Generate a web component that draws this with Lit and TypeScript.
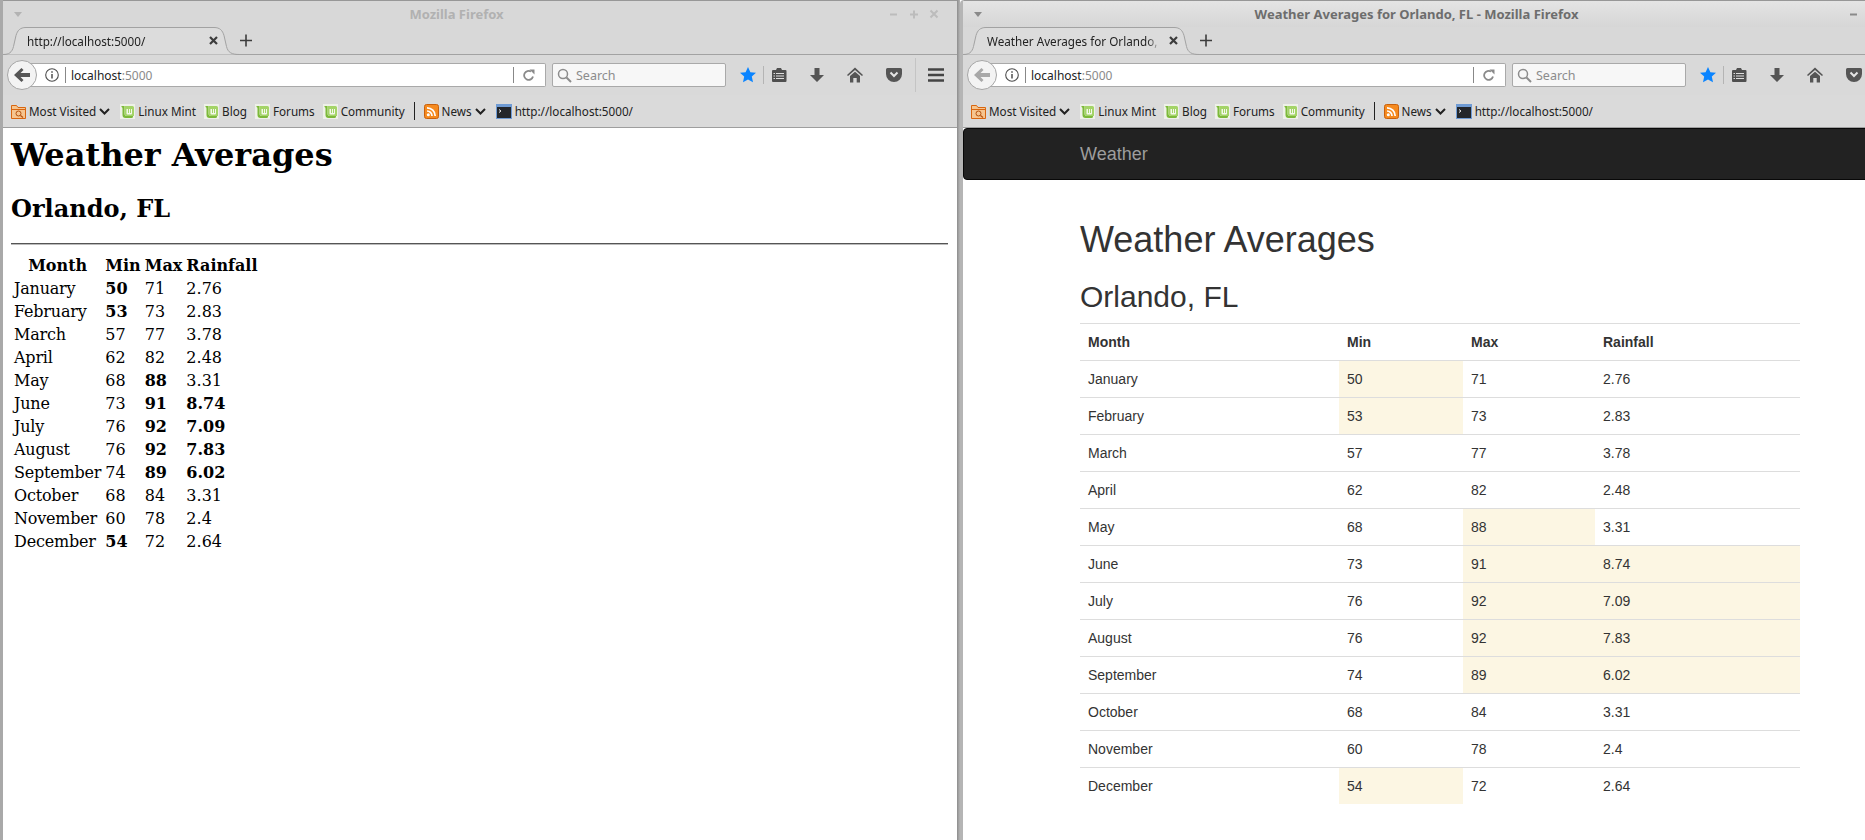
import { LitElement, html, css, svg } from 'lit';
import { customElement, property } from 'lit/decorators.js';

const MONTHS: [string, number, number, string][] = [
  ['January', 50, 71, '2.76'],
  ['February', 53, 73, '2.83'],
  ['March', 57, 77, '3.78'],
  ['April', 62, 82, '2.48'],
  ['May', 68, 88, '3.31'],
  ['June', 73, 91, '8.74'],
  ['July', 76, 92, '7.09'],
  ['August', 76, 92, '7.83'],
  ['September', 74, 89, '6.02'],
  ['October', 68, 84, '3.31'],
  ['November', 60, 78, '2.4'],
  ['December', 54, 72, '2.64'],
];

const coldMin = (v: number) => v < 55;
const hotMax = (v: number) => v > 85;
const wetMonth = (v: string) => parseFloat(v) > 5;

const mintIcon = html`<svg class="ico" width="15" height="15" viewBox="0 0 15 15">
  <rect width="15" height="15" fill="#eef1e8" />
  <path d="M1.500 2h3v7.500a2.500 2.500 0 0 0 2.500 2.500h6v.5a1.500 1.500 0 0 1-1.500 1.500H5.500a3 3 0 0 1-3-3V4.500a1.500 1.500 0 0 0-1-1.500z" fill="#7cb93a" />
  <path d="M4.500 2h8a1.500 1.500 0 0 1 1.500 1.500V12H7a2.500 2.500 0 0 1-2.500-2.500z" fill="#a4d468" />
  <path d="M6.500 9V5h1.500v4h1V5h1v4h1V5h1v4.500a1 1 0 0 1-1 1H7.500a1 1 0 0 1-1-1z" fill="#f3f8ea" />
</svg>`;

const folderIcon = html`<svg class="ico" width="15" height="15" viewBox="0 0 15 15">
  <path d="M.5 1.500h5l1.500 2h7.500v11H.5z" fill="#f6c58f" stroke="#d9660f" />
  <path d="M.5 5.500h14" stroke="#d9660f" />
  <circle cx="7.500" cy="9.500" r="2.500" fill="none" stroke="#b5500c" />
  <path d="M9.500 11.500l2.500 2" stroke="#b5500c" stroke-width="1.300" />
</svg>`;

const rssIcon = html`<svg class="ico" width="15" height="15" viewBox="0 0 15 15">
  <rect x=".5" y=".5" width="14" height="14" rx="2" fill="#f58a1f" stroke="#c9610c" />
  <circle cx="4.300" cy="10.700" r="1.500" fill="#fff" />
  <path d="M3 7a5 5 0 0 1 5 5M3 3.800A8.200 8.200 0 0 1 11.200 12" fill="none" stroke="#fff" stroke-width="1.700" />
</svg>`;

const termIcon = html`<svg class="ico" width="16" height="15" viewBox="0 0 16 15">
  <rect width="16" height="15" fill="#6f9bd4" />
  <rect x="1" y="3" width="14" height="11" fill="#23262b" />
  <path d="M3 5.500l2 1.500-2 1.500" fill="none" stroke="#e8e8e8" />
</svg>`;

const chevron = html`<svg class="chev" width="11" height="7" viewBox="0 0 11 7">
  <path d="M1 1l4.500 4.500L10 1" fill="none" stroke="#222" stroke-width="2" />
</svg>`;

const toolIcon = (body: unknown, w = 16) =>
  html`<svg class="tool" width=${w} height="16" viewBox="0 0 16 16">${body}</svg>`;

const starIcon = toolIcon(svg`<path d="M8 0l2.400 5.200 5.600.6-4.200 3.800 1.200 5.700L8 12.400l-5 2.900 1.200-5.700L0 5.800l5.600-.6z" fill="#0a84ff" />`);
const clipIcon = toolIcon(svg`<path d="M1.500 3h3.500l1-2h4l1 2h3.500a1 1 0 0 1 1 1v10a1 1 0 0 1-1 1h-12.500a1 1 0 0 1-1-1V4a1 1 0 0 1 1-1z" fill="#4f4f4f" /><path d="M5 6.500h8M5 9h8M5 11.500h8M2.500 6.500h1.500M2.500 9h1.500M2.500 11.500h1.500" stroke="#ddd" stroke-width="1.200" />`);
const downIcon = toolIcon(svg`<path d="M5.500 1h5v7H15l-7 7-7-7h4.500z" fill="#555" />`);
const homeIcon = toolIcon(svg`<path d="M8 .500L16 8l-1 1-7-6-7 6-1-1z" fill="#555" /><path d="M3 9l5-4.200L13 9v6.500h-3.300V11H6.300v4.500H3z" fill="#555" />`);
const pocketIcon = toolIcon(svg`<path d="M1.500 1h13A1.500 1.500 0 0 1 16 2.500V7a8 8 0 0 1-16 0V2.500A1.500 1.500 0 0 1 1.500 1z" fill="#555" /><path d="M4.500 5.500L8 9l3.500-3.500" fill="none" stroke="#e4e4e4" stroke-width="2" />`);
const menuIcon = toolIcon(svg`<path d="M0 2.500h16M0 8h16M0 13.500h16" stroke="#444" stroke-width="2.400" />`);

@customElement('browser-window')
export class BrowserWindow extends LitElement {
  @property({ type: Boolean, reflect: true }) active = false;
  @property() winTitle = '';
  @property() tabTitle = '';

  static styles = css`
    :host {
      display: flex;
      flex-direction: column;
      flex: none;
      width: 960px;
      height: 840px;
      box-sizing: border-box;
      border-left: 3px solid #a9a9a9;
      background: #d8d8d8;
      font-family: 'Noto Sans', sans-serif;
      font-size: 11.700px;
      color: #222;
      position: relative;
      overflow: hidden;
    }
    :host([active]) {
      border-top-left-radius: 4px;
      border-left-color: #b5b5b5;
    }
    .edge {
      position: absolute;
      top: 0;
      right: 0;
      bottom: 0;
      width: 3px;
      background: linear-gradient(to right, #8c8c8c, #b5b5b5);
    }
    .titlebar {
      display: flex;
      align-items: center;
      height: 27px;
      border-top: 1px solid #979797;
      box-sizing: border-box;
      padding-left: 11px;
    }
    :host([active]) .titlebar {
      background: linear-gradient(#e4e4e4, #d6d6d6);
    }
    .menu-arrow {
      width: 0;
      height: 0;
      border-left: 4px solid transparent;
      border-right: 4px solid transparent;
      border-top: 5px solid #b3b3b3;
      margin-right: 8px;
    }
    :host([active]) .menu-arrow {
      border-top-color: #8a8a8a;
    }
    .title {
      flex: 1;
      text-align: center;
      font-weight: 700;
      font-size: 13px;
      color: #b1b1b1;
    }
    :host([active]) .title {
      color: #6d6d6d;
    }
    .controls {
      display: flex;
      gap: 10px;
      width: 77px;
      box-sizing: border-box;
      padding-left: 6px;
    }
    .controls svg {
      display: block;
    }
    .tabs {
      position: relative;
      display: flex;
      align-items: center;
      height: 28px;
      flex: none;
      border-bottom: 1px solid #a2a2a2;
      box-sizing: border-box;
    }
    .tab {
      position: relative;
      display: flex;
      align-items: center;
      width: 237px;
      height: 28px;
      box-sizing: border-box;
      padding: 0 22px 0 24px;
    }
    .tab-shape {
      position: absolute;
      left: 0;
      top: 0;
    }
    .tab-text {
      position: relative;
      flex: 1;
      overflow: hidden;
      white-space: nowrap;
      -webkit-mask-image: linear-gradient(to right, #000 92%, transparent);
    }
    .tab-close {
      position: relative;
      margin-left: 8px;
    }
    .new-tab {
      display: block;
    }
    .toolbar {
      display: flex;
      align-items: center;
      height: 40px;
      flex: none;
      padding-left: 4px;
      background: #d9d9d9;
    }
    .back {
      position: relative;
      display: flex;
      align-items: center;
      justify-content: center;
      width: 30px;
      height: 30px;
      box-sizing: border-box;
      border-radius: 50%;
      border: 1px solid #a6a6a6;
      background: #f3f3f3;
      margin-right: -7px;
      flex: none;
    }
    .urlbar {
      display: flex;
      align-items: center;
      width: 516px;
      height: 24px;
      box-sizing: border-box;
      border: 1px solid #a9a9a9;
      border-left: none;
      border-radius: 0 2px 2px 0;
      background: #fff;
      font-size: 12px;
      flex: none;
    }
    .info {
      margin-left: 15px;
      flex: none;
    }
    .bar-sep {
      width: 1px;
      height: 16px;
      background: #888;
      flex: none;
    }
    .info-sep {
      margin-left: 6px;
    }
    .host {
      flex: 1;
      margin-left: 5px;
    }
    .host span {
      color: #8a8a8a;
    }
    .reload {
      width: 31px;
      padding-right: 1px;
      box-sizing: border-box;
      display: flex;
      justify-content: center;
    }
    .search {
      display: flex;
      align-items: center;
      gap: 4px;
      width: 174px;
      height: 24px;
      box-sizing: border-box;
      margin-left: 6px;
      padding-left: 4px;
      border: 1px solid #a9a9a9;
      border-radius: 2px;
      background: #f7f7f7;
      color: #8c8c8c;
      font-size: 12.500px;
      flex: none;
    }
    .tools {
      display: flex;
      align-items: center;
      height: 40px;
    }
    .tool {
      display: block;
      flex: none;
    }
    .t-star { margin-left: 14px; }
    .t-sep1 { width: 1px; height: 18px; background: #b4b4b4; margin-left: 7px; }
    .t-clip { margin-left: 7px; }
    .t-down { margin-left: 22px; }
    .t-home { margin-left: 22px; }
    .t-pocket { margin-left: 23px; }
    .t-sep2 { width: 1px; height: 34px; background: #c4c4c4; margin-left: 13px; }
    .t-menu { margin-left: 12px; }
    .bookmarks {
      display: flex;
      align-items: center;
      height: 33px;
      flex: none;
      padding-left: 8px;
      box-sizing: border-box;
      border-bottom: 1px solid #9e9e9e;
      background: #dadada;
      white-space: nowrap;
    }
    .bm {
      display: flex;
      align-items: center;
      gap: 3px;
      margin-right: 8px;
    }
    .bm.menu {
      margin-right: 10px;
    }
    .bm-sep {
      width: 1px;
      height: 18px;
      background: #222;
      margin: 0 9px 0 1px;
    }
    .ico,
    .chev {
      display: block;
      flex: none;
    }
    .content {
      flex: 1;
      background: #fff;
      min-height: 0;
    }
  `;

  render() {
    return html`
      <div class="titlebar">
        <div class="menu-arrow"></div>
        <div class="title">${this.winTitle}</div>
        <div class="controls">
          ${[
            'M1 5.500h7',
            'M1 5.500h8M5 1.500v8',
            'M1.500 1.500l7 7M8.500 1.500l-7 7',
          ].map(
            (d) => html`<svg width="10" height="11" viewBox="0 0 10 11">
              <path d=${d} fill="none" stroke=${this.active ? '#8a8a8a' : '#bcbcbc'} stroke-width="2" />
            </svg>`
          )}
        </div>
      </div>
      <div class="tabs">
        <div class="tab">
          <svg class="tab-shape" width="237" height="28" viewBox="0 0 237 28">
            <path
              d="M0 27.500c6 0 9-2 10.500-8l2.500-11c1.500-5 4-8 10-8h188c6 0 8.500 3 10 8l2.500 11c1.500 6 5 8 13 8"
              fill="#dcdcdc"
              stroke="#a2a2a2"
            />
          </svg>
          <span class="tab-text">${this.tabTitle}</span>
          <svg class="tab-close" width="9" height="9" viewBox="0 0 9 9">
            <path d="M1 1l7 7M8 1l-7 7" stroke="#3c3c3c" stroke-width="2.200" />
          </svg>
        </div>
        <svg class="new-tab" width="13" height="13" viewBox="0 0 13 13">
          <path d="M0 6.500h12M6 .5v12" stroke="#3d3d3d" stroke-width="1.600" />
        </svg>
      </div>
      <div class="toolbar">
        <div class="back">
          <svg width="16" height="14" viewBox="0 0 16 14">
            <path d="M7.500 0l2 2-3 3H16v4H6.500l3 3-2 2L0 7z" fill=${this.active ? '#a8a8a8' : '#555'} />
          </svg>
        </div>
        <div class="urlbar">
          <svg class="info" width="14" height="14" viewBox="0 0 14 14">
            <circle cx="7" cy="7" r="6.300" fill="none" stroke="#4d4d4d" stroke-width="1.100" />
            <path d="M7 6v4.500M7 3.300v1.500" stroke="#4d4d4d" stroke-width="1.500" />
          </svg>
          <div class="bar-sep info-sep"></div>
          <div class="host">localhost<span>:5000</span></div>
          <div class="bar-sep"></div>
          <div class="reload">
            <svg width="12" height="12" viewBox="0 0 12 12">
              <path d="M10 7.500A4.500 4.500 0 1 1 8 2.500" fill="none" stroke="#8a8a8a" stroke-width="1.800" />
              <path d="M6.500 0.500H11.500V5.500z" fill="#8a8a8a" />
            </svg>
          </div>
        </div>
        <div class="search">
          <svg width="15" height="15" viewBox="0 0 15 15">
            <circle cx="6" cy="6" r="4.500" fill="none" stroke="#8c8c8c" stroke-width="1.500" />
            <path d="M9.500 9.500l4.500 4.500" stroke="#8c8c8c" stroke-width="2" />
          </svg>
          Search
        </div>
        <div class="tools">
          <div class="t-star">${starIcon}</div>
          <div class="t-sep1"></div>
          <div class="t-clip">${clipIcon}</div>
          <div class="t-down">${downIcon}</div>
          <div class="t-home">${homeIcon}</div>
          <div class="t-pocket">${pocketIcon}</div>
          <div class="t-sep2"></div>
          <div class="t-menu">${menuIcon}</div>
        </div>
      </div>
      <div class="bookmarks">
        <div class="bm menu">${folderIcon}<span>Most Visited</span>${chevron}</div>
        <div class="bm">${mintIcon}<span>Linux Mint</span></div>
        <div class="bm">${mintIcon}<span>Blog</span></div>
        <div class="bm">${mintIcon}<span>Forums</span></div>
        <div class="bm">${mintIcon}<span>Community</span></div>
        <div class="bm-sep"></div>
        <div class="bm menu">${rssIcon}<span>News</span>${chevron}</div>
        <div class="bm">${termIcon}<span>http://localhost:5000/</span></div>
      </div>
      <div class="content"><slot></slot></div>
      <div class="edge"></div>
    `;
  }
}

@customElement('plain-page')
export class PlainPage extends LitElement {
  static styles = css`
    :host {
      display: block;
      padding: 0 12px 0 8px;
      font-family: 'DejaVu Serif', serif;
      font-size: 16px;
      color: #000;
    }
    h1 {
      margin: 0;
      padding-top: 9px;
      font-size: 32px;
      line-height: 37px;
    }
    h2 {
      margin: 21px 0 0;
      font-size: 24px;
      line-height: 28px;
    }
    hr {
      margin: 20px 0 8px;
      border: none;
      border-top: 1px solid #555;
      border-bottom: 1px solid #bbb;
    }
    th {
      font-weight: 700;
    }
    td.b {
      font-weight: 700;
    }
    td.month {
      letter-spacing: -0.2px;
    }
    table {
      line-height: 19px;
    }
  `;

  render() {
    return html`
      <h1>Weather Averages</h1>
      <h2>Orlando, FL</h2>
      <hr />
      <table>
        <tr><th>Month</th><th>Min</th><th>Max</th><th>Rainfall</th></tr>
        ${MONTHS.map(
          ([m, lo, hi, rain]) => html`<tr>
            <td class="month">${m}</td>
            <td class=${coldMin(lo) ? 'b' : ''}>${lo}</td>
            <td class=${hotMax(hi) ? 'b' : ''}>${hi}</td>
            <td class=${wetMonth(rain) ? 'b' : ''}>${rain}</td>
          </tr>`
        )}
      </table>
    `;
  }
}

@customElement('styled-page')
export class StyledPage extends LitElement {
  static styles = css`
    :host {
      display: block;
      font-family: 'Liberation Sans', Arial, sans-serif;
      font-size: 14px;
      line-height: 20px;
      color: #333;
    }
    .navbar {
      height: 52px;
      box-sizing: border-box;
      width: 954px;
      margin-bottom: 20px;
      background: #222;
      border: 1px solid #080808;
      border-radius: 4px;
    }
    .container {
      width: 720px;
      margin: 0 auto;
      box-sizing: content-box;
      padding: 0 15px;
    }
    .body-wrap {
      width: 954px;
    }
    .brand {
      font-size: 18px;
      line-height: 50px;
      color: #9d9d9d;
    }
    h1,
    h2 {
      font-weight: 500;
      line-height: 1.1;
      margin: 0 0 10px;
    }
    h1 {
      font-size: 36px;
      padding-top: 20px;
    }
    h2 {
      font-size: 30px;
      padding-top: 10px;
    }
    table {
      width: 720px;
      table-layout: fixed;
      border-collapse: collapse;
      border-spacing: 0;
    }
    th,
    td {
      padding: 8px;
      text-align: left;
      border-top: 1px solid #ddd;
    }
    th {
      font-weight: 700;
    }
    td.warn {
      background: #fcf6e3;
    }
    .c0 { width: 259px; }
    .c1 { width: 124px; }
    .c2 { width: 132px; }
  `;

  render() {
    return html`
      <div class="navbar">
        <div class="container"><div class="brand">Weather</div></div>
      </div>
      <div class="body-wrap">
        <div class="container">
          <h1>Weather Averages</h1>
          <h2>Orlando, FL</h2>
          <table>
            <colgroup><col class="c0" /><col class="c1" /><col class="c2" /><col /></colgroup>
            <tr><th>Month</th><th>Min</th><th>Max</th><th>Rainfall</th></tr>
            ${MONTHS.map(
              ([m, lo, hi, rain]) => html`<tr>
                <td>${m}</td>
                <td class=${coldMin(lo) ? 'warn' : ''}>${lo}</td>
                <td class=${hotMax(hi) ? 'warn' : ''}>${hi}</td>
                <td class=${wetMonth(rain) ? 'warn' : ''}>${rain}</td>
              </tr>`
            )}
          </table>
        </div>
      </div>
    `;
  }
}

@customElement('app-root')
export class AppRoot extends LitElement {
  static styles = css`
    :host {
      display: flex;
      width: 1865px;
      height: 840px;
      overflow: hidden;
    }
  `;

  render() {
    return html`
      <browser-window winTitle="Mozilla Firefox" tabTitle="http://localhost:5000/">
        <plain-page></plain-page>
      </browser-window>
      <browser-window
        active
        winTitle="Weather Averages for Orlando, FL - Mozilla Firefox"
        tabTitle="Weather Averages for Orlando, FL"
      >
        <styled-page></styled-page>
      </browser-window>
    `;
  }
}
